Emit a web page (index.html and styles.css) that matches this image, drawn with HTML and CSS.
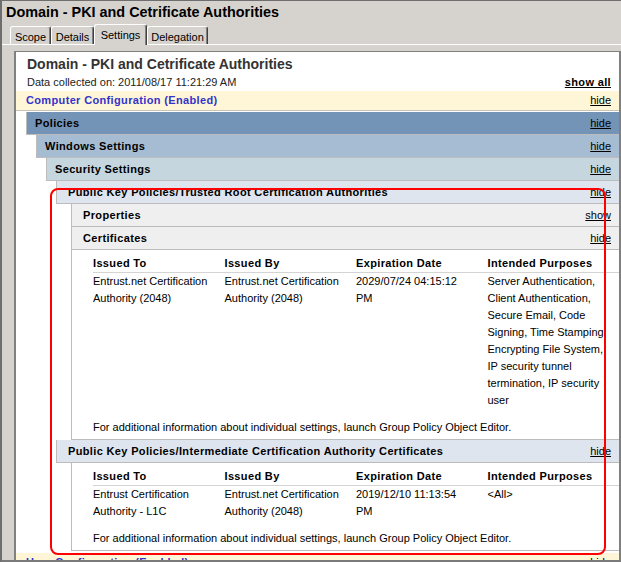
FILE: index.html
```html
<!DOCTYPE html>
<html>
<head>
<meta charset="utf-8">
<title>Domain - PKI and Cetrificate Authorities</title>
<link rel="stylesheet" href="styles.css">
</head>
<body>
<div class="window">
  <div class="titlebar">Domain - PKI and Cetrificate Authorities</div>
  <div class="tabs">
    <div class="tab t-scope">Scope</div>
    <div class="tab t-details">Details</div>
    <div class="tab t-settings active">Settings</div>
    <div class="tab t-deleg">Delegation</div>
  </div>
  <div class="panel">
    <div class="report">
      <div class="rtitle">Domain - PKI and Cetrificate Authorities</div>
      <div class="collected"><span>Data collected on: 2011/08/17 11:21:29 AM</span><a class="showall">show all</a></div>

      <div class="hdr cfg"><span>Computer Configuration (Enabled)</span><a>hide</a></div>
      <div class="sub l1">
        <div class="hdr h-pol"><span>Policies</span><a>hide</a></div>
        <div class="sub l1">
          <div class="hdr h-win"><span>Windows Settings</span><a>hide</a></div>
          <div class="sub l1">
            <div class="hdr h-sec"><span>Security Settings</span><a>hide</a></div>
            <div class="sub l1">
              <div class="hdr h-pk"><span>Public Key Policies/Trusted Root Certification Authorities</span><a>hide</a></div>
              <div class="sub l2">
                <div class="hdr h-cat"><span>Properties</span><a>show</a></div>
                <div class="hdr h-cat"><span>Certificates</span><a>hide</a></div>
                <div class="box">
                  <div class="grid">
                    <div class="th">Issued To</div>
                    <div class="th">Issued By</div>
                    <div class="th">Expiration Date</div>
                    <div class="th">Intended Purposes</div>
                    <div class="td">Entrust.net Certification<br>Authority (2048)</div>
                    <div class="td">Entrust.net Certification<br>Authority (2048)</div>
                    <div class="td">2029/07/24 04:15:12<br>PM</div>
                    <div class="td">Server Authentication,<br>Client Authentication,<br>Secure Email, Code<br>Signing, Time Stamping,<br>Encrypting File System,<br>IP security tunnel<br>termination, IP security<br>user</div>
                  </div>
                  <div class="note">For additional information about individual settings, launch Group Policy Object Editor.</div>
                </div>
              </div>
              <div class="hdr h-pk"><span>Public Key Policies/Intermediate Certification Authority Certificates</span><a>hide</a></div>
              <div class="sub l2">
                <div class="box">
                  <div class="grid">
                    <div class="th">Issued To</div>
                    <div class="th">Issued By</div>
                    <div class="th">Expiration Date</div>
                    <div class="th">Intended Purposes</div>
                    <div class="td">Entrust Certification<br>Authority - L1C</div>
                    <div class="td">Entrust.net Certification<br>Authority (2048)</div>
                    <div class="td">2019/12/10 11:13:54<br>PM</div>
                    <div class="td">&lt;All&gt;</div>
                  </div>
                  <div class="note">For additional information about individual settings, launch Group Policy Object Editor.</div>
                </div>
              </div>
            </div>
          </div>
        </div>
      </div>
      <div class="hdr cfg user"><span>User Configuration (Enabled)</span><a>hide</a></div>
    </div>
  </div>
</div>
<div class="annot"></div>
</body>
</html>
```
FILE: styles.css
```css
* { box-sizing: border-box; }
html, body { margin: 0; padding: 0; }
body {
  width: 621px;
  height: 562px;
  overflow: hidden;
  background: #d6d3ce;
  font-family: "Liberation Sans", Arial, sans-serif;
  font-size: 11px;
  color: #000;
}
.window {
  height: 562px;
  display: flex;
  flex-direction: column;
  border-top: 1px solid #6e6e6e;
  border-left: 2px solid #6e6e6e;
  border-bottom: 2px solid #7a7a7a;
}
.titlebar {
  flex: none;
  height: 23px;
  line-height: 23px;
  padding-left: 4px;
  font-size: 14.4px;
  font-weight: bold;
  white-space: nowrap;
}
.tabs {
  flex: none;
  height: 21px;
  display: flex;
  align-items: flex-end;
  padding-left: 8px;
  border-bottom: 1px solid #fff;
}
.tab {
  height: 18px;
  border: 1px solid #fff;
  border-bottom: 0;
  border-right-color: #404040;
  box-shadow: inset -1px 0 #808080;
  border-radius: 3px 3px 0 0;
  padding-top: 3px;
  line-height: 14px;
  text-align: center;
  white-space: nowrap;
}
.t-scope { width: 41px; }
.t-details { width: 43px; }
.t-settings { width: 53px; }
.t-deleg { width: 61px; }
.tab.active {
  height: 21px;
  margin-bottom: -1px;
  background: #d6d3ce;
}
.panel {
  flex: 1;
  min-height: 0;
  display: flex;
  padding: 6px 0 0 12px;
}
.report {
  flex: 1;
  min-width: 0;
  background: #fff;
  border-top: 1px solid #808080;
  border-left: 2px solid #808080;
  border-right: 2px solid #808080;
  overflow: hidden;
  padding-top: 4px;
}
.rtitle {
  padding-left: 11px;
  font-size: 14px;
  line-height: 17px;
  font-weight: bold;
  color: #333;
  white-space: nowrap;
}
.collected {
  display: flex;
  justify-content: space-between;
  padding: 0 8px 0 11px;
  line-height: 18px;
  color: #222;
}
.showall {
  font-weight: bold;
  letter-spacing: 0.35px;
  text-decoration: underline;
  color: #000;
}
.hdr {
  display: flex;
  justify-content: space-between;
  height: 23px;
  line-height: 22px;
  border-bottom: 1px solid #bcbcbc;
  border-left: 1px solid #bcbcbc;
  padding: 0 8px 0 8px;
  font-weight: bold;
  letter-spacing: 0.35px;
  white-space: nowrap;
}
.hdr a {
  font-weight: normal;
  letter-spacing: 0;
  text-decoration: underline;
  color: #000;
}
.cfg {
  height: 20px;
  line-height: 19px;
  border-left: 0;
  padding-left: 10px;
  margin-bottom: 1px;
  background: #fef6d6;
  border-bottom-color: #c8c4b4;
  color: #3333cc;
}
.user { margin-top: 2px; }
.sub.l1 { margin-left: 10px; }
.sub.l2 { margin-left: 15px; }
.h-pol { background: #7393b7; }
.h-win { background: #a6bcd2; }
.h-sec { background: #c5d6df; }
.h-pk { background: #dee5ef; padding-left: 11px; }
.h-cat { background: #efefef; padding-left: 11px; }
.box {
  border-left: 1px solid #bcbcbc;
  border-bottom: 1px solid #bcbcbc;
  padding: 5px 0 3px 21px;
}
.grid {
  display: grid;
  grid-template-columns: repeat(4, minmax(0, 1fr));
}
.th {
  font-weight: bold;
  letter-spacing: 0.35px;
  line-height: 17px;
  border-bottom: 1px solid #d4d4d4;
  white-space: nowrap;
}
.td {
  line-height: 17px;
  white-space: nowrap;
  padding-right: 6px;
}
.note {
  margin-top: 10px;
  line-height: 17px;
  white-space: nowrap;
}
.annot {
  position: absolute;
  left: 50px;
  top: 188px;
  width: 556px;
  height: 367px;
  border: 2px solid #ff0000;
  border-radius: 8px;
}
```
